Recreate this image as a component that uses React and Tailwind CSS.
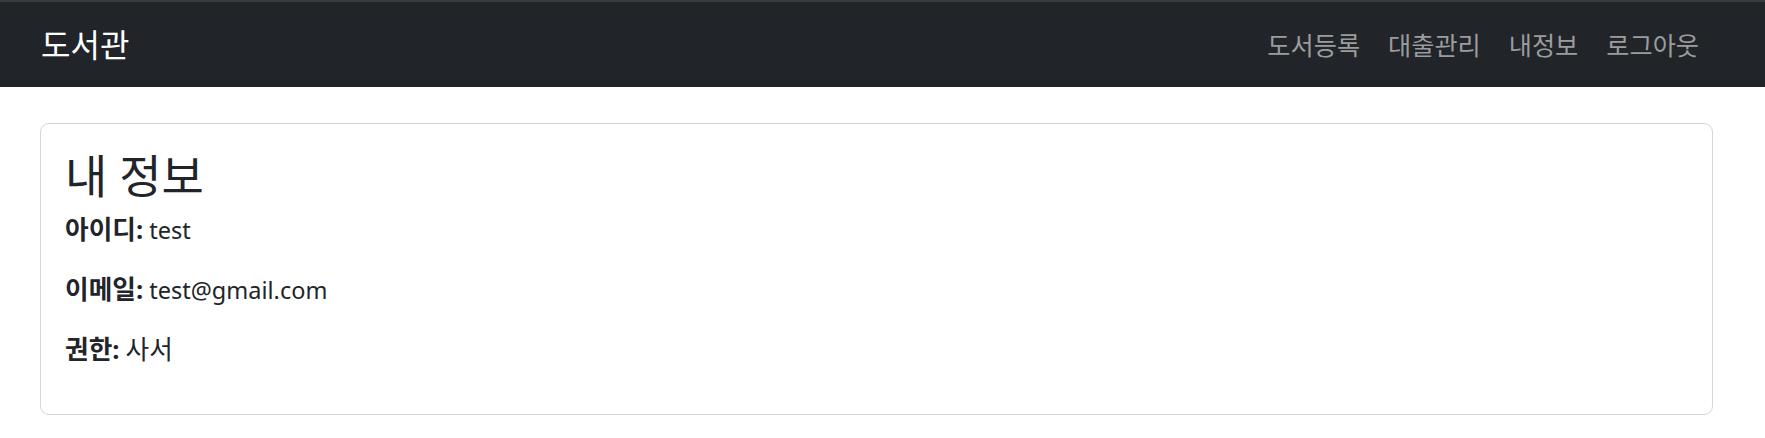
export default function App() {
  const font = { fontFamily: '"Noto Sans", "Noto Sans CJK KR", sans-serif' };
  const links = ['도서등록', '대출관리', '내정보', '로그아웃'];
  const rows = [
    { label: '아이디:', value: 'test', korean: false },
    { label: '이메일:', value: 'test@gmail.com', korean: false },
    { label: '권한:', value: '사서', korean: true }
  ];

  return (
    <div className="min-h-[438px] bg-white text-[#212529]" style={font}>
      <nav className="flex h-[87px] items-center justify-between border-t-2 border-[#3b3b3b] bg-[#212529] pl-[41px] pr-[52px]">
        <a className="text-[32px] leading-[45px] text-white">도서관</a>
        <div className="flex items-center">
          {links.map((link) => (
            <a key={link} className="px-[14px] text-[25.2px] leading-[36px] text-[#9a9c9e]">
              {link}
            </a>
          ))}
        </div>
      </nav>

      <div className="pl-[40px] pr-[52px] pt-[36px]">
        <div className="rounded-[9px] border border-[#d6d6d6] px-[24px] pb-[24px] pt-[26px]">
          <h3 className="mb-[12px] text-[46px] leading-[50px]">내 정보</h3>
          {rows.map((row) => (
            <p key={row.label} className="mb-[24px] h-[36px] text-[23.5px] leading-[36px] last:mb-[22px]">
              <strong className="text-[25.7px] font-bold">{row.label}</strong>{' '}
              <span className={row.korean ? 'text-[25.7px]' : ''}>{row.value}</span>
            </p>
          ))}
        </div>
      </div>
    </div>
  );
}
